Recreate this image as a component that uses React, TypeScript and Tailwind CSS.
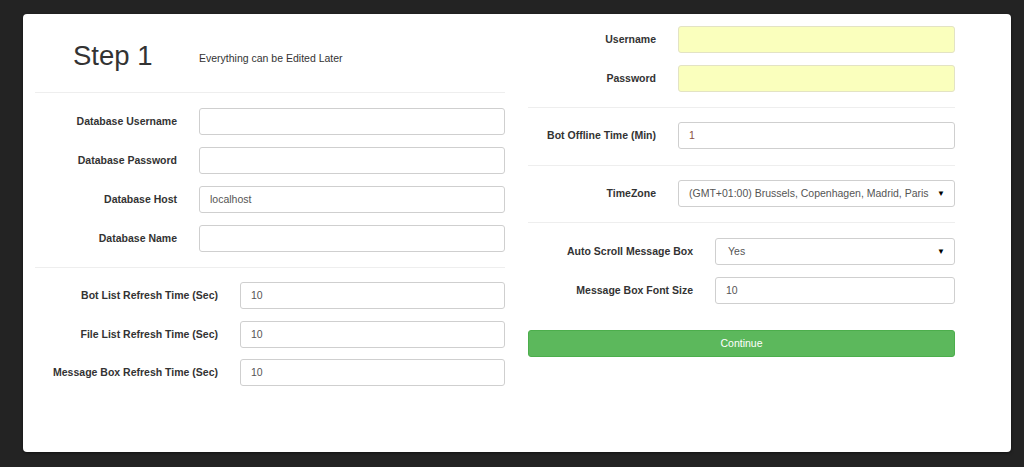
import React from 'react';

const font = { fontFamily: '"Liberation Sans", Arial, sans-serif' };

interface FieldProps {
  label: string;
  value?: string;
  labelW: string;
  autofill?: boolean;
  select?: boolean;
  valueClass?: string;
}

const Field: React.FC<FieldProps> = ({ label, value, labelW, autofill, select, valueClass }) => (
  <div className="flex items-center h-[27px]">
    <label className={`${labelW} shrink-0 text-right pr-[22px] text-[10.5px] font-bold text-[#333] leading-none whitespace-nowrap`}>
      {label}
    </label>
    <div
      className={`flex-1 h-[27px] rounded-[3px] border flex items-center px-[10px] text-[10.5px] leading-none ${
        autofill ? 'bg-[#faffbd] border-[#e3e3c4]' : 'bg-white border-[#cfcfcf]'
      }`}
    >
      <span className={`flex-1 whitespace-nowrap ${valueClass ?? 'text-[#555]'}`}>{value}</span>
      {select && <span className="text-[8px] text-black -mr-[1px]">▼</span>}
    </div>
  </div>
);

const Hr = () => <div className="h-px bg-[#eeeeee]" />;

export default function App() {
  return (
    <div className="w-[1024px] h-[467px] bg-[#232323] pt-[14px] pl-[23px] pr-[13px] pb-[15px]" style={font}>
      <div className="h-[438px] bg-white rounded-[4px] shadow-[0_1px_3px_rgba(0,0,0,0.5)] flex pl-[12px]">
        {/* left column */}
        <div className="w-[470px]">
          <div className="h-[78px] flex items-center pt-[6px]">
            <h1 className="pl-[38px] w-[164px] text-[27.5px] text-[#333] leading-none">Step 1</h1>
            <span className="text-[10.5px] text-[#333] mt-[6px]">Everything can be Edited Later</span>
          </div>
          <Hr />
          <div className="flex flex-col gap-[12px] pt-[15px] pb-[15px]">
            <Field label="Database Username" labelW="w-[164px]" />
            <Field label="Database Password" labelW="w-[164px]" />
            <Field label="Database Host" labelW="w-[164px]" value="localhost" />
            <Field label="Database Name" labelW="w-[164px]" />
          </div>
          <Hr />
          <div className="flex flex-col gap-[11.5px] pt-[14px]">
            <Field label="Bot List Refresh Time (Sec)" labelW="w-[205px]" value="10" />
            <Field label="File List Refresh Time (Sec)" labelW="w-[205px]" value="10" />
            <Field label="Message Box Refresh Time (Sec)" labelW="w-[205px]" value="10" />
          </div>
        </div>

        {/* right column */}
        <div className="w-[427px] ml-[23px]">
          <div className="flex flex-col gap-[12px] pt-[12px] pb-[15px]">
            <Field label="Username" labelW="w-[150px]" autofill />
            <Field label="Password" labelW="w-[150px]" autofill />
          </div>
          <Hr />
          <div className="pt-[14px] pb-[16px]">
            <Field label="Bot Offline Time (Min)" labelW="w-[150px]" value="1" valueClass="text-[#8a5040]" />
          </div>
          <Hr />
          <div className="pt-[14px] pb-[15px]">
            <Field label="TimeZone" labelW="w-[150px]" value="(GMT+01:00) Brussels, Copenhagen, Madrid, Paris" select />
          </div>
          <Hr />
          <div className="flex flex-col gap-[12px] pt-[15px]">
            <Field label="Auto Scroll Message Box" labelW="w-[187px]" value="Yes" select valueClass="text-[#555] pl-[2px]" />
            <Field label="Message Box Font Size" labelW="w-[187px]" value="10" />
          </div>
          <button className="mt-[26px] w-full h-[27px] rounded-[3px] bg-[#5cb85c] border border-[#4cae4c] text-white text-[10.5px]">
            Continue
          </button>
        </div>
      </div>
    </div>
  );
}
